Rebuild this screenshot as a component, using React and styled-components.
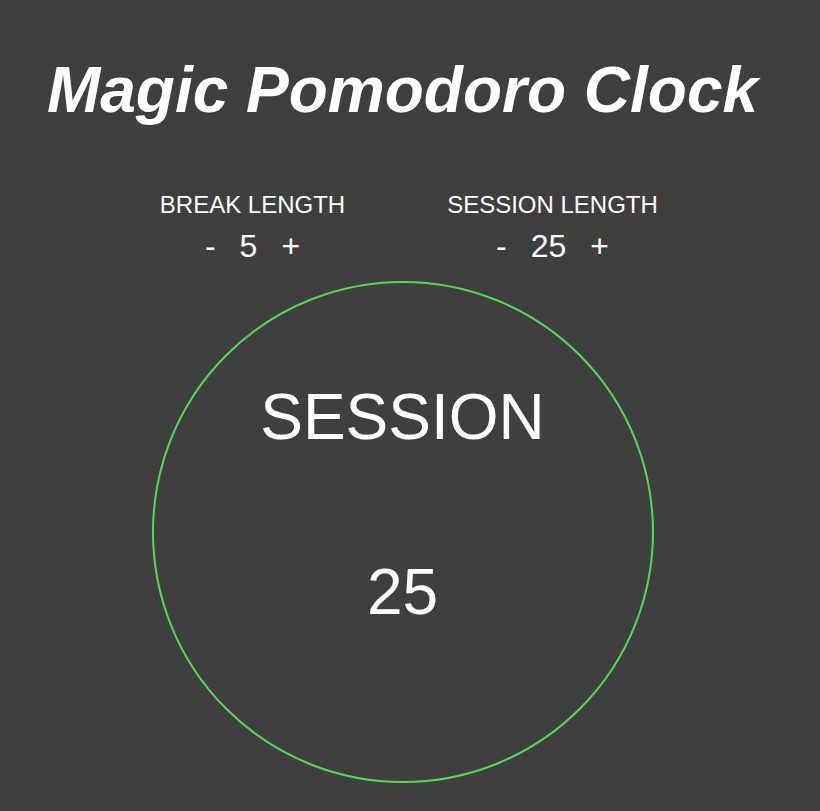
import React, { useState } from 'react';
import styled, { createGlobalStyle } from 'styled-components';

const GlobalStyle = createGlobalStyle`
  html, body {
    margin: 0;
    padding: 0;
    background-color: #3f3f3f;
  }
  body {
    font-family: "Liberation Sans", Arial, sans-serif;
    color: #ffffff;
  }
`;

function Control({ label, value, onDec, onInc }) {
  return (
    <Column>
      <Label>{label}</Label>
      <Stepper>
        <StepBtn onClick={onDec}>-</StepBtn>
        <Value>{value}</Value>
        <StepBtn onClick={onInc}>+</StepBtn>
      </Stepper>
    </Column>
  );
}

function App() {
  const [breakLength, setBreakLength] = useState(5);
  const [sessionLength, setSessionLength] = useState(25);

  const clamp = (n) => Math.min(60, Math.max(1, n));

  return (
    <>
      <GlobalStyle />
      <Page>
        <Title>Magic Pomodoro Clock</Title>
        <Controls>
          <Control
            label="BREAK LENGTH"
            value={breakLength}
            onDec={() => setBreakLength((v) => clamp(v - 1))}
            onInc={() => setBreakLength((v) => clamp(v + 1))}
          />
          <Control
            label="SESSION LENGTH"
            value={sessionLength}
            onDec={() => setSessionLength((v) => clamp(v - 1))}
            onInc={() => setSessionLength((v) => clamp(v + 1))}
          />
        </Controls>
        <Clock>
          <ClockLabel>SESSION</ClockLabel>
          <ClockTime>{sessionLength}</ClockTime>
        </Clock>
      </Page>
    </>
  );
}

export default App;

const Page = styled.div`
  display: flex;
  flex-direction: column;
  align-items: center;
  padding: 54px 15px 0 0;
`;

const Title = styled.h1`
  margin: 0;
  font-size: 64px;
  font-weight: 700;
  font-style: italic;
  line-height: 1.15;
`;

const Controls = styled.div`
  display: flex;
  margin-top: 63px;
`;

const Column = styled.div`
  width: 300px;
  display: flex;
  flex-direction: column;
  align-items: center;
`;

const Label = styled.div`
  font-size: 24px;
  line-height: 1.15;
`;

const Stepper = styled.div`
  display: flex;
  align-items: center;
  gap: 24px;
  margin-top: 10px;
  font-size: 32px;
  line-height: 1.15;
`;

const StepBtn = styled.span`
  cursor: pointer;
  user-select: none;
`;

const Value = styled.span``;

const Clock = styled.div`
  box-sizing: content-box;
  margin-top: 16px;
  width: 498px;
  height: 400px;
  padding-top: 98px;
  border: 2px solid #52d852;
  border-radius: 50%;
  display: flex;
  flex-direction: column;
  align-items: center;
  gap: 101px;
`;

const ClockLabel = styled.div`
  font-size: 64px;
  line-height: 1.15;
`;

const ClockTime = styled.div`
  font-size: 64px;
  line-height: 1.15;
`;
